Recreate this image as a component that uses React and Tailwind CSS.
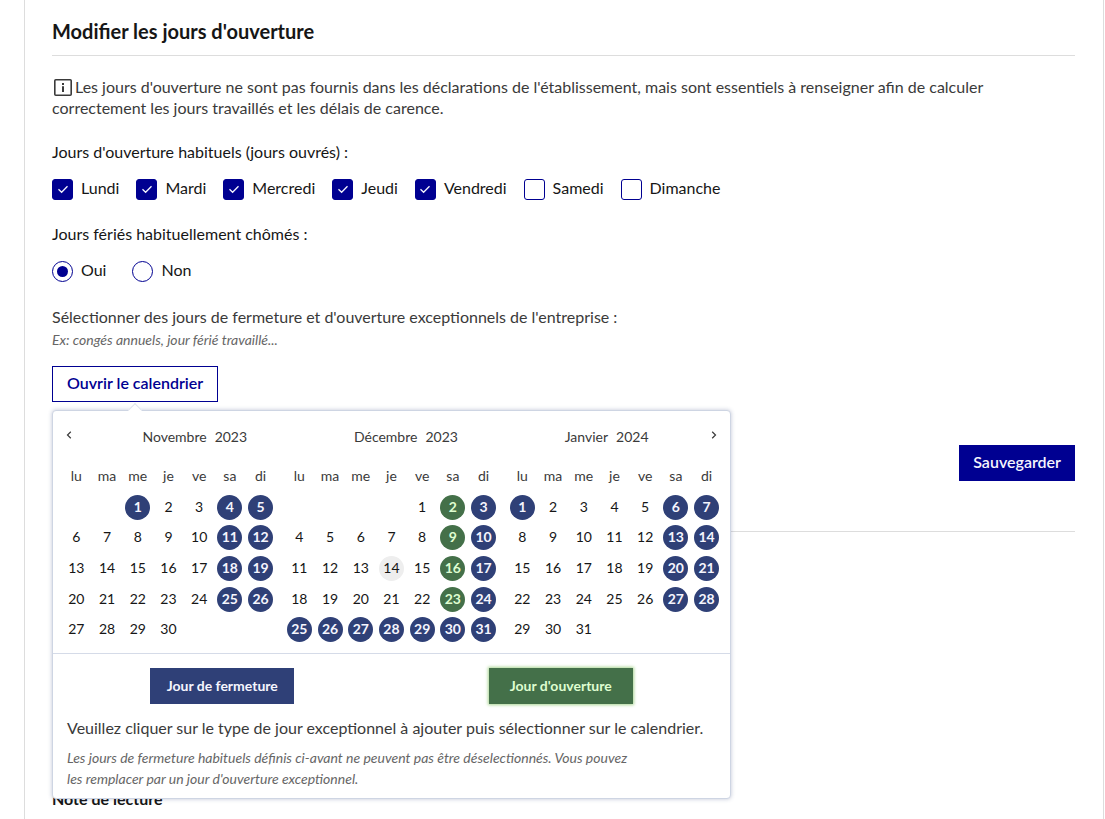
import React, { useState } from "react";

const MONTHS = [
  {
    name: "Novembre",
    year: 2023,
    offset: 2,
    length: 30,
    closed: [1, 4, 5, 11, 12, 18, 19, 25, 26],
    open: [],
  },
  {
    name: "Décembre",
    year: 2023,
    offset: 4,
    length: 31,
    today: 14,
    closed: [3, 10, 17, 24, 25, 26, 27, 28, 29, 30, 31],
    open: [2, 9, 16, 23],
  },
  {
    name: "Janvier",
    year: 2024,
    offset: 0,
    length: 31,
    closed: [1, 6, 7, 13, 14, 20, 21, 27, 28],
    open: [],
  },
];

const WEEKDAYS = ["lu", "ma", "me", "je", "ve", "sa", "di"];

const OPENING_DAYS = [
  ["Lundi", true],
  ["Mardi", true],
  ["Mercredi", true],
  ["Jeudi", true],
  ["Vendredi", true],
  ["Samedi", false],
  ["Dimanche", false],
];

function InfoIcon() {
  return (
    <svg
      viewBox="0 0 18 17"
      className="mr-[3px] ml-[2px] inline-block h-[17px] w-[18px] align-[-3px]"
      fill="none"
      aria-hidden="true"
    >
      <rect x="0.8" y="0.8" width="16.4" height="15.4" rx="1" stroke="#3a3a3a" strokeWidth="1.6" />
      <path d="M8 4h2v2H8zM8 7.2h2V13H8z" fill="#3a3a3a" />
    </svg>
  );
}

function Chevron({ direction }) {
  return (
    <svg viewBox="0 0 6 8" className="h-2 w-1.5" fill="none" stroke="#3a3a3a" strokeWidth="1.2" aria-hidden="true">
      <path d={direction === "left" ? "M4.8 0.8 1.5 4l3.3 3.2" : "M1.2 0.8 4.5 4 1.2 7.2"} />
    </svg>
  );
}

function DayCheckbox({ label, defaultChecked }) {
  return (
    <label className="flex items-center gap-2">
      <span className="grid size-[21px] place-items-center">
        <input
          type="checkbox"
          defaultChecked={defaultChecked}
          className="peer col-start-1 row-start-1 size-[21px] appearance-none rounded-[3px] border border-[#000091] bg-white checked:bg-[#000091]"
        />
        <svg
          viewBox="0 0 10 10"
          className="pointer-events-none col-start-1 row-start-1 hidden size-2.5 peer-checked:block"
          fill="none"
          stroke="#f5f5fe"
          strokeWidth="1.3"
          aria-hidden="true"
        >
          <path d="M0.5 4.3 3.6 7.3 9.5 1.3" />
        </svg>
      </span>
      <span className="pb-[3px] leading-[18px]">{label}</span>
    </label>
  );
}

function HolidayRadio({ label, defaultChecked }) {
  return (
    <label className="flex items-center gap-2">
      <span className="grid size-[21px] place-items-center">
        <input
          type="radio"
          name="feries"
          defaultChecked={defaultChecked}
          className="peer col-start-1 row-start-1 size-[21px] appearance-none rounded-full border border-[#000091] bg-white"
        />
        <span className="pointer-events-none col-start-1 row-start-1 hidden size-[11px] rounded-full bg-[#000091] peer-checked:block" />
      </span>
      <span className="pb-[3px] leading-[18px]">{label}</span>
    </label>
  );
}

function dayStyle(month, day) {
  if (month.open.includes(day)) return "bg-[#447049] font-bold text-[#dffdd0]";
  if (month.closed.includes(day)) return "bg-[#2f4077] font-bold text-[#f5f5fe]";
  if (month.today === day) return "bg-[#eeeeee] text-[#161616]";
  return "text-[#161616]";
}

function Month({ month }) {
  const weeks = [0, 1, 2, 3, 4].map((w) =>
    WEEKDAYS.map((_, d) => {
      const day = w * 7 + d - month.offset + 1;
      return day >= 1 && day <= month.length ? day : null;
    })
  );
  return (
    <table
      aria-label={`${month.name} ${month.year}`}
      className="h-[185px] w-full table-fixed border-collapse text-center text-[14px]"
    >
      <thead>
        <tr className="h-8">
          {WEEKDAYS.map((d) => (
            <th key={d} scope="col" className="p-0 pb-[2px] font-normal text-[#3a3a3a]">
              {d}
            </th>
          ))}
        </tr>
      </thead>
      <tbody>
        {weeks.map((week, w) => (
          <tr key={w}>
            {week.map((day, d) => (
              <td key={d} className="p-0">
                {day && (
                  <button
                    type="button"
                    className={`mx-auto flex size-[25px] items-center justify-center rounded-full pb-[2px] ${dayStyle(month, day)}`}
                  >
                    {day}
                  </button>
                )}
              </td>
            ))}
          </tr>
        ))}
      </tbody>
    </table>
  );
}

function CalendarPopover() {
  return (
    <div
      role="dialog"
      aria-label="Calendrier"
      className="absolute top-[44px] left-0 z-10 w-[679px] rounded-[4px] border border-[#ced5e3] bg-white shadow-[0_0_4px_rgba(47,64,119,0.3)]"
    >
      <span className="absolute -top-[6px] left-[77px] size-[10px] rotate-45 border-t border-l border-[#dfe4ee] bg-white" />
      <div className="relative flex h-[49px] items-start px-2 pt-4 text-[14px] leading-5 text-[#3a3a3a]">
        <button type="button" aria-label="Mois précédent" className="grid size-4 place-items-center">
          <Chevron direction="left" />
        </button>
        <div className="flex flex-1 justify-around pr-1 pl-3">
          {MONTHS.map((m) => (
            <div key={m.name} className="flex gap-2">
              <span>{m.name}</span>
              <span>{m.year}</span>
            </div>
          ))}
        </div>
        <button type="button" aria-label="Mois suivant" className="grid size-4 place-items-center">
          <Chevron direction="right" />
        </button>
      </div>
      <div className="grid grid-cols-3 gap-2 border-b border-[#d5dbe8] px-2 pb-2">
        {MONTHS.map((m) => (
          <Month key={m.name} month={m} />
        ))}
      </div>
      <div className="grid grid-cols-2 justify-items-center pt-[14px] text-[14px] font-bold">
        <button type="button" className="h-9 w-36 bg-[#2f4077] pb-[2px] text-[#f5f5fe]">
          Jour de fermeture
        </button>
        <button type="button" className="h-9 w-36 bg-[#447049] pb-[2px] text-[#dffdd0] shadow-[0_0_3px_1px_#a9d592]">
          Jour d'ouverture
        </button>
      </div>
      <div className="px-3.5 pt-[13px] pb-[9px]">
        <p className="text-[#3a3a3a]">
          Veuillez cliquer sur le type de jour exceptionnel à ajouter puis sélectionner sur le calendrier.
        </p>
        <p className="mt-[9px] max-w-[570px] text-[14px] leading-[21px] text-[#666666] italic">
          Les jours de fermeture habituels définis ci-avant ne peuvent pas être déselectionnés. Vous pouvez les
          remplacer par un jour d'ouverture exceptionnel.
        </p>
      </div>
    </div>
  );
}

export default function App() {
  const [open, setOpen] = useState(true);
  return (
    <div className="h-screen overflow-hidden bg-white font-[Lato,sans-serif] text-base leading-[21px] text-[#161616]">
      <main className="mr-px ml-6 min-h-full border-x border-[#dddddd] pt-[19px] pr-7 pl-[27px]">
        <h2 className="border-b border-[#dddddd] pb-3 text-[20px] leading-6 font-bold">
          Modifier les jours d'ouverture
        </h2>

        <p className="mt-5 text-[#3a3a3a]">
          <InfoIcon />
          Les jours d'ouverture ne sont pas fournis dans les déclarations de l'établissement, mais sont essentiels à
          renseigner afin de calculer correctement les jours travaillés et les délais de carence.
        </p>

        <fieldset className="mt-[23px]">
          <legend>Jours d'ouverture habituels (jours ouvrés) :</legend>
          <div className="mt-[17px] flex flex-wrap gap-x-[17px]">
            {OPENING_DAYS.map(([label, checked]) => (
              <DayCheckbox key={label} label={label} defaultChecked={checked} />
            ))}
          </div>
        </fieldset>

        <fieldset className="mt-[23px]">
          <legend>Jours fériés habituellement chômés :</legend>
          <div className="mt-[17px] flex gap-x-[26px]">
            <HolidayRadio label="Oui" defaultChecked />
            <HolidayRadio label="Non" />
          </div>
        </fieldset>

        <p className="mt-6 text-[#3a3a3a]">
          Sélectionner des jours de fermeture et d'ouverture exceptionnels de l'entreprise :
        </p>
        <p className="mt-[2px] text-[14px] leading-[21px] text-[#666666] italic">
          Ex: congés annuels, jour férié travaillé...
        </p>

        <div className="relative mt-4">
          <button
            type="button"
            aria-expanded={open}
            onClick={() => setOpen(!open)}
            className="h-9 border border-[#000091] px-3.5 pb-1 font-semibold text-[#000091]"
          >
            Ouvrir le calendrier
          </button>
          {open && <CalendarPopover />}
        </div>

        <div className="mt-[43px] flex justify-end border-b border-[#dddddd] pb-[50px]">
          <button type="button" className="h-9 bg-[#000091] px-3.5 pb-1 font-semibold text-[#f5f5fe]">
            Sauvegarder
          </button>
        </div>

        <div className="mt-[204px] h-10 border-l border-[#6a9bd8]" />
        <h3 className="mt-3 font-bold">Note de lecture</h3>
      </main>
    </div>
  );
}
